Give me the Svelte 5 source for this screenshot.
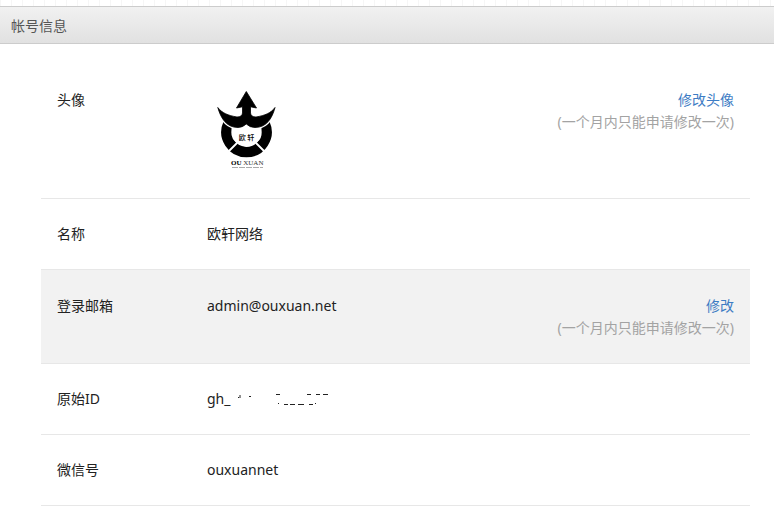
<script>
  const note = '(一个月内只能申请修改一次)';
  const rows = [
    { label: '头像', kind: 'logo', action: '修改头像' },
    { label: '名称', value: '欧轩网络' },
    { label: '登录邮箱', value: 'admin@ouxuan.net', action: '修改', active: true },
    { label: '原始ID', value: 'gh_', kind: 'masked' },
    { label: '微信号', value: 'ouxuannet' }
  ];
  const horns =
    'M39.3 2.500 49.500 19 43.500 17.800V24Q44 28 49 28C58 26.500 64 24 68 18.5C65 30 59 38.500 48 38.5Q43 38.5 39.3 35Q35.5 38.5 31 38.5C20 38.500 14 30 10.8 18.5C15 24 21 26.500 30 28Q35 28 35.500 24V17.800L29.500 19Z';
</script>

<div class="strip"></div>
<header><h1>帐号信息</h1></header>
<main>
  <dl>
    {#each rows as row}
      <div class="row" class:active={row.active}>
        <dt>{row.label}</dt>
        <dd class="value">
          {#if row.kind === 'logo'}
            <svg class="logo" viewBox="0 0 80 85" role="img" aria-label="OUXUAN">
              <path d="M21.3 34.8A20 20 0 1 0 57.7 34.8" fill="none" stroke="#000" stroke-width="10.5" />
              <path d="M30 54 21 63M49 54l9 9" stroke="#fff" stroke-width="1.8" />
              <path d="M24.500 37H54.500V46Q53 55 39.5 58Q26 55 24.500 46Z" fill="#fff" />
              <path d={horns} stroke="#fff" stroke-width="3" />
              <path d={horns} stroke="#000" stroke-width="0.8" />
              <text class="mark" x="39.5" y="51" text-anchor="middle">欧 轩</text>
              <text class="brand" x="24" y="76"><tspan class="heavy">OU</tspan> XUAN</text>
              <path d="M25 78.5H56" stroke="#aaa" stroke-width="1" stroke-dasharray="6 1" />
            </svg>
          {:else}
            {row.value}{#if row.kind === 'masked'}<svg class="mask" viewBox="0 0 100 22" aria-hidden="true">
                <path
                  d="M10 7v3M8 9.5h1M19 8.5h2M46 6.5h4M77 6.5h4M86 6.5h4M93 6.5h5M48 15.5h1M54 16.5h4M60 16.5h5M68 16.5h6M79 16.5h4M85 15.5h1"
                  stroke="#222"
                />
              </svg>{/if}
          {/if}
        </dd>
        {#if row.action}
          <dd class="action"><a href="#edit">{row.action}</a><span>{note}</span></dd>
        {/if}
      </div>
    {/each}
  </dl>
</main>

<style>
  :global(body) {
    background: #fff;
    color: #222;
    font: 14px/22px "Noto Sans", "Noto Sans CJK SC", sans-serif;
  }
  .strip {
    height: 6px;
    background: repeating-linear-gradient(90deg, #f6f6f6 0 1px, #fff 1px 11px);
  }
  header {
    padding: 8px 11px 6px;
    border-top: 1px solid #ccc;
    border-bottom: 1px solid #ccc;
    background: linear-gradient(#f1f1f1, #e1e1e1);
  }
  h1 {
    margin: 0;
    color: #555;
    font-size: 14px;
    font-weight: 400;
  }
  main {
    padding: 21px 24px 0 41px;
  }
  dl,
  dd {
    margin: 0;
  }
  .row {
    display: flex;
    padding: 24px 16px;
    border-bottom: 1px solid #e7e7e7;
  }
  .active {
    padding-top: 25px;
    background: #f2f2f2;
  }
  dt {
    width: 150px;
    flex: none;
  }
  .value {
    flex: 1;
  }
  .action {
    text-align: right;
    color: #a3a3a3;
  }
  .action span {
    display: block;
  }
  a {
    color: #3d7cc4;
    text-decoration: none;
  }
  .logo {
    display: block;
    width: 80px;
    height: 85px;
  }
  .mark {
    font: 500 7px "Noto Sans CJK SC", sans-serif;
  }
  .brand {
    font: 7px "Liberation Serif", serif;
    fill: #333;
  }
  .heavy {
    font-weight: 700;
    fill: #000;
  }
  .mask {
    width: 100px;
    height: 22px;
    vertical-align: top;
  }
</style>
